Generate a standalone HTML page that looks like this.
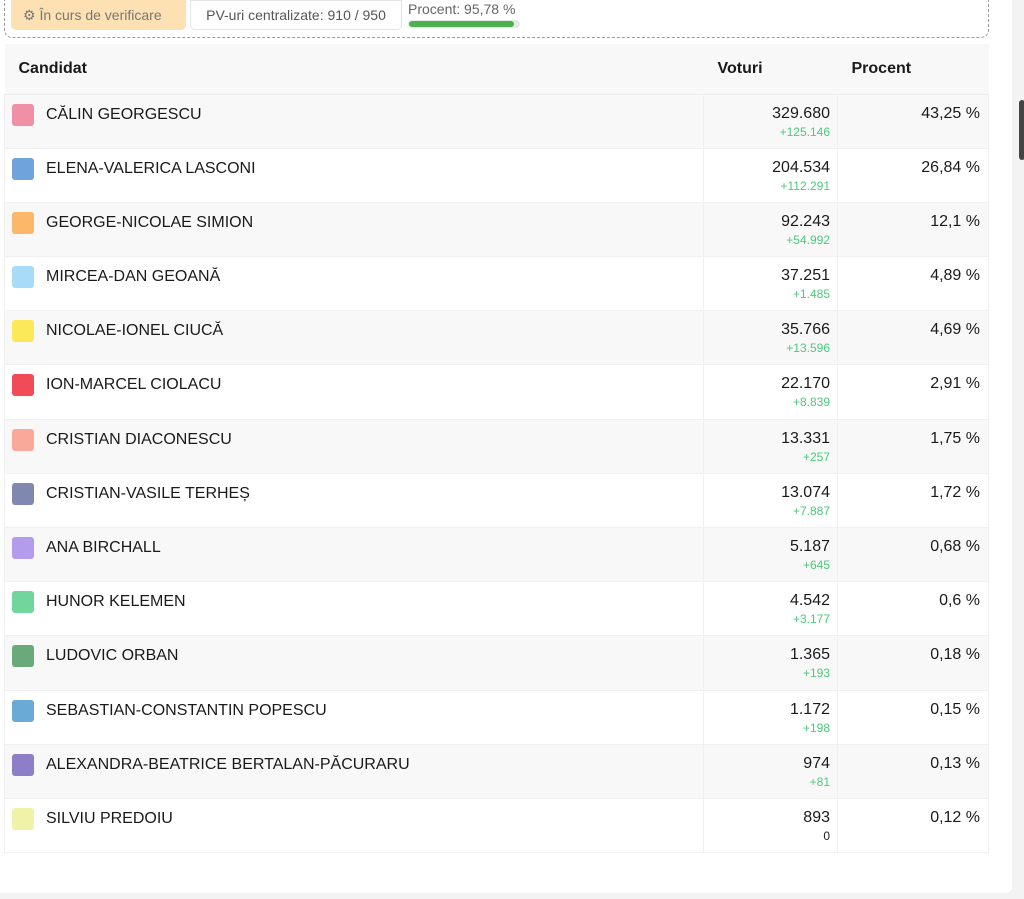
<!DOCTYPE html>
<html><head><meta charset="utf-8"><style>
*{box-sizing:border-box;margin:0;padding:0}
body{width:1024px;height:899px;background:#f3f3f3;font-family:"Liberation Sans",sans-serif;color:#1a1a1a;position:relative;overflow:hidden}
.card{position:absolute;left:0;top:0;width:1012px;height:893px;background:#fff;border-radius:0 0 6px 0}
.top{position:absolute;left:4px;top:-10px;width:985px;height:48px;border:1px dashed #9a9a9a;border-radius:0 0 8px 8px}
.b1{position:absolute;left:11px;top:0;width:175px;height:30px;background:#fde1b3;border-radius:0 0 5px 5px;color:#777;font-size:14px;line-height:30px;padding-left:12px}
.b2{position:absolute;left:190px;top:0;width:212px;height:30px;border:1px solid #e4e4e4;border-radius:0 0 5px 5px;color:#555;font-size:14px;line-height:28px;text-align:center}
.pc{position:absolute;left:408px;top:1px;font-size:14px;color:#666}
.bar{position:absolute;left:408px;top:20px;width:112px;height:8px;background:#e8e8e8;border-radius:4px}
.bar i{display:block;width:105px;height:6px;margin:1px;background:#4caf50;border-radius:3px}
table{position:absolute;left:4px;top:44px;width:985px;border-collapse:collapse}
th{height:50px;background:#f8f8f8;text-align:left;font-size:16px;font-weight:bold;padding-left:14px;border-bottom:1px solid #ececec}
td{height:54.2px;border:1px solid #f0f0f0;vertical-align:top;font-size:16px}
tr:nth-child(even) td{background:#f8f8f8}
td.n{padding:9px 0 0 7px;position:relative}
td.n span{display:inline-block;width:22px;height:22px;border-radius:3px;vertical-align:middle;margin-right:12px}
td.v{width:134px;text-align:right;padding:10px 7px 0 0;line-height:18px}
td.v small{display:block;font-size:12px;color:#4cc97a;line-height:18px}
td.p{width:151px;text-align:right;padding:10px 8px 0 0}
.side{position:absolute;left:1019px;top:100px;width:6px;height:60px;background:#444;border-radius:3px}
</style></head><body>
<div class="card">
<div class="top"></div>
<div class="b1">⚙ În curs de verificare</div>
<div class="b2">PV-uri centralizate: 910 / 950</div>
<div class="pc">Procent: 95,78 %</div>
<div class="bar"><i></i></div>
<table>
<tr><th>Candidat</th><th>Voturi</th><th>Procent</th></tr>
<tr><td class="n"><span style="background:#f08fa5"></span>CĂLIN GEORGESCU</td><td class="v">329.680<small>+125.146</small></td><td class="p">43,25 %</td></tr>
<tr><td class="n"><span style="background:#6fa3dc"></span>ELENA-VALERICA LASCONI</td><td class="v">204.534<small>+112.291</small></td><td class="p">26,84 %</td></tr>
<tr><td class="n"><span style="background:#fbb86a"></span>GEORGE-NICOLAE SIMION</td><td class="v">92.243<small>+54.992</small></td><td class="p">12,1 %</td></tr>
<tr><td class="n"><span style="background:#a8dbf7"></span>MIRCEA-DAN GEOANĂ</td><td class="v">37.251<small>+1.485</small></td><td class="p">4,89 %</td></tr>
<tr><td class="n"><span style="background:#fde85a"></span>NICOLAE-IONEL CIUCĂ</td><td class="v">35.766<small>+13.596</small></td><td class="p">4,69 %</td></tr>
<tr><td class="n"><span style="background:#f04b57"></span>ION-MARCEL CIOLACU</td><td class="v">22.170<small>+8.839</small></td><td class="p">2,91 %</td></tr>
<tr><td class="n"><span style="background:#f9a99a"></span>CRISTIAN DIACONESCU</td><td class="v">13.331<small>+257</small></td><td class="p">1,75 %</td></tr>
<tr><td class="n"><span style="background:#8088b0"></span>CRISTIAN-VASILE TERHEȘ</td><td class="v">13.074<small>+7.887</small></td><td class="p">1,72 %</td></tr>
<tr><td class="n"><span style="background:#b39cec"></span>ANA BIRCHALL</td><td class="v">5.187<small>+645</small></td><td class="p">0,68 %</td></tr>
<tr><td class="n"><span style="background:#72d69c"></span>HUNOR KELEMEN</td><td class="v">4.542<small>+3.177</small></td><td class="p">0,6 %</td></tr>
<tr><td class="n"><span style="background:#6aa97a"></span>LUDOVIC ORBAN</td><td class="v">1.365<small>+193</small></td><td class="p">0,18 %</td></tr>
<tr><td class="n"><span style="background:#6aaad6"></span>SEBASTIAN-CONSTANTIN POPESCU</td><td class="v">1.172<small>+198</small></td><td class="p">0,15 %</td></tr>
<tr><td class="n"><span style="background:#8e7ec7"></span>ALEXANDRA-BEATRICE BERTALAN-PĂCURARU</td><td class="v">974<small>+81</small></td><td class="p">0,13 %</td></tr>
<tr><td class="n"><span style="background:#eef3a8"></span>SILVIU PREDOIU</td><td class="v">893<small style="color:#222">0</small></td><td class="p">0,12 %</td></tr>
</table>
</div>
<div class="side"></div>
</body></html>
